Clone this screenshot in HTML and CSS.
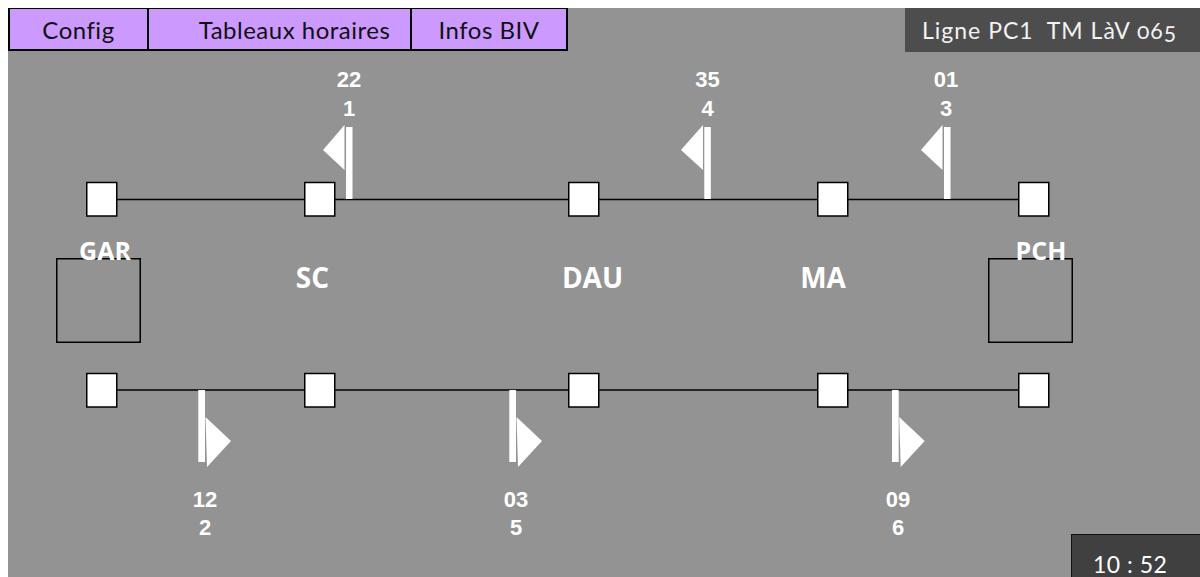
FILE: index.html
```html
<!DOCTYPE html>
<html lang="fr">
<head>
	<meta charset="UTF-8">
	<meta name="viewport" content="width=device-width, initial-scale=1.0">
	<title>Ligne PC1 - TM LàV 065</title>
	<link rel="stylesheet" href="styles.css">
</head>

<body>
	<div class="screen">
		<svg class="synoptic" viewBox="8 8 1192 569" width="1192" height="569">
			<!-- voies -->
			<line class="track" x1="117" y1="199.5" x2="1018" y2="199.5" />
			<line class="track" x1="117" y1="390" x2="1018" y2="390" />

			<!-- quais voie haute -->
			<rect class="stop" x="86.75" y="182.5" width="30" height="33.5" />
			<rect class="stop" x="304.75" y="182.5" width="30" height="33.5" />
			<rect class="stop" x="568.75" y="182.5" width="30" height="33.5" />
			<rect class="stop" x="817.75" y="182.5" width="30" height="33.5" />
			<rect class="stop" x="1018.75" y="182.5" width="30" height="33.5" />

			<!-- quais voie basse -->
			<rect class="stop" x="86.75" y="373.5" width="30" height="33.5" />
			<rect class="stop" x="304.75" y="373.5" width="30" height="33.5" />
			<rect class="stop" x="568.75" y="373.5" width="30" height="33.5" />
			<rect class="stop" x="817.75" y="373.5" width="30" height="33.5" />
			<rect class="stop" x="1018.75" y="373.5" width="30" height="33.5" />

			<!-- dépôts -->
			<rect class="depot" x="56.75" y="258.75" width="83.5" height="83.5" />
			<rect class="depot" x="988.75" y="258.75" width="83.5" height="83.5" />
			<text class="depot-name" x="105" y="260">GAR</text>
			<text class="depot-name" x="1041" y="260">PCH</text>

			<!-- stations -->
			<text class="station" x="312.5" y="288">SC</text>
			<text class="station" x="592.5" y="288">DAU</text>
			<text class="station" x="823" y="288">MA</text>

			<!-- trains voie haute -->
			<rect class="pole" x="346" y="127" width="6.5" height="72" />
			<polygon class="flag" points="344.5,125 323,150 344.5,170" />
			<text class="num" x="349" y="87">22</text>
			<text class="num" x="349" y="116">1</text>

			<rect class="pole" x="704.3" y="127" width="6.5" height="72" />
			<polygon class="flag" points="703,125 681,150 703,170" />
			<text class="num" x="707.5" y="87">35</text>
			<text class="num" x="707.5" y="116">4</text>

			<rect class="pole" x="944" y="127" width="6.5" height="72" />
			<polygon class="flag" points="942.5,125 921,150 942.5,170" />
			<text class="num" x="946" y="87">01</text>
			<text class="num" x="946" y="116">3</text>

			<!-- trains voie basse -->
			<rect class="pole" x="198.3" y="390" width="6.7" height="72" />
			<polygon class="flag" points="205.5,417 231,441 207,467" />
			<text class="num" x="205" y="507">12</text>
			<text class="num" x="205" y="535">2</text>

			<rect class="pole" x="509.3" y="390" width="6.7" height="72" />
			<polygon class="flag" points="516.5,417 542,441 518,467" />
			<text class="num" x="516" y="507">03</text>
			<text class="num" x="516" y="535">5</text>

			<rect class="pole" x="892" y="390" width="6.7" height="72" />
			<polygon class="flag" points="899.2,417 924.7,441 900.7,467" />
			<text class="num" x="898" y="507">09</text>
			<text class="num" x="898" y="535">6</text>
		</svg>

		<header class="topbar">
			<nav class="tabs">
				<a class="tab tab-config">Config</a>
				<a class="tab tab-tables">Tableaux horaires</a>
				<a class="tab tab-biv">Infos BIV</a>
			</nav>
			<div class="line-title">Ligne PC1&nbsp; TM LàV <span class="onum">065</span></div>
		</header>

		<div class="clock">10 : 52</div>
	</div>
</body>

</html>
```

FILE: styles.css
```css
body {
	margin: 8px 0 0 8px;
	overflow: hidden;
	background: #fff;
	font-family: "Lato", "Open Sans", sans-serif;
}

.screen {
	position: relative;
	height: 569px;
	overflow: hidden;
	background: #939393;
}

/* synoptique */
.synoptic {position: absolute; top: 0; left: 0;}
.track {stroke: #000; stroke-width: 1.5;}
.stop {fill: #fff; stroke: #000; stroke-width: 1.5;}
.depot {fill: none; stroke: #000; stroke-width: 1.5;}
.pole, .flag {fill: #fff;}
.num {
	font: bold 22px "Liberation Sans", Arial, sans-serif;
	fill: #fff;
	text-anchor: middle;
}
.station, .depot-name {
	font-family: "Open Sans", sans-serif;
	font-weight: 700;
	fill: #fff;
	text-anchor: middle;
}
.station {font-size: 28px;}
.depot-name {font-size: 25px;}

/* bandeau */
.topbar {
	position: relative;
	display: flex;
	justify-content: space-between;
	align-items: flex-start;
}

.tabs {
	display: flex;
	height: 44px;
	margin-top: -1px;
	border: 2px solid #000;
	box-sizing: border-box;
	background: #cc99ff;
}

.tab {
	display: flex;
	align-items: center;
	justify-content: center;
	box-sizing: border-box;
	border-right: 2px solid #000;
	font-size: 24px;
	letter-spacing: 0.5px;
	color: #111;
}
.tab-config {width: 139px;}
.tab-tables {width: 263px; padding-left: 30px;}
.tab-biv {width: 154px; border-right: 0;}

.line-title {
	display: flex;
	align-items: center;
	width: 295px;
	height: 44px;
	padding-left: 17px;
	box-sizing: border-box;
	background: #4d4d4d;
	color: #f2f2f2;
	font-size: 23px;
	letter-spacing: 1px;
	white-space: pre;
}
.onum {font-feature-settings: "onum";}

.clock {
	position: absolute;
	left: 1063px;
	top: 526px;
	width: 140px;
	height: 60px;
	padding: 16px 0 0 21px;
	box-sizing: border-box;
	border: 1px solid #111;
	background: #404040;
	color: #fff;
	font-size: 23px;
	letter-spacing: 0.5px;
	line-height: 26px;
}
```
